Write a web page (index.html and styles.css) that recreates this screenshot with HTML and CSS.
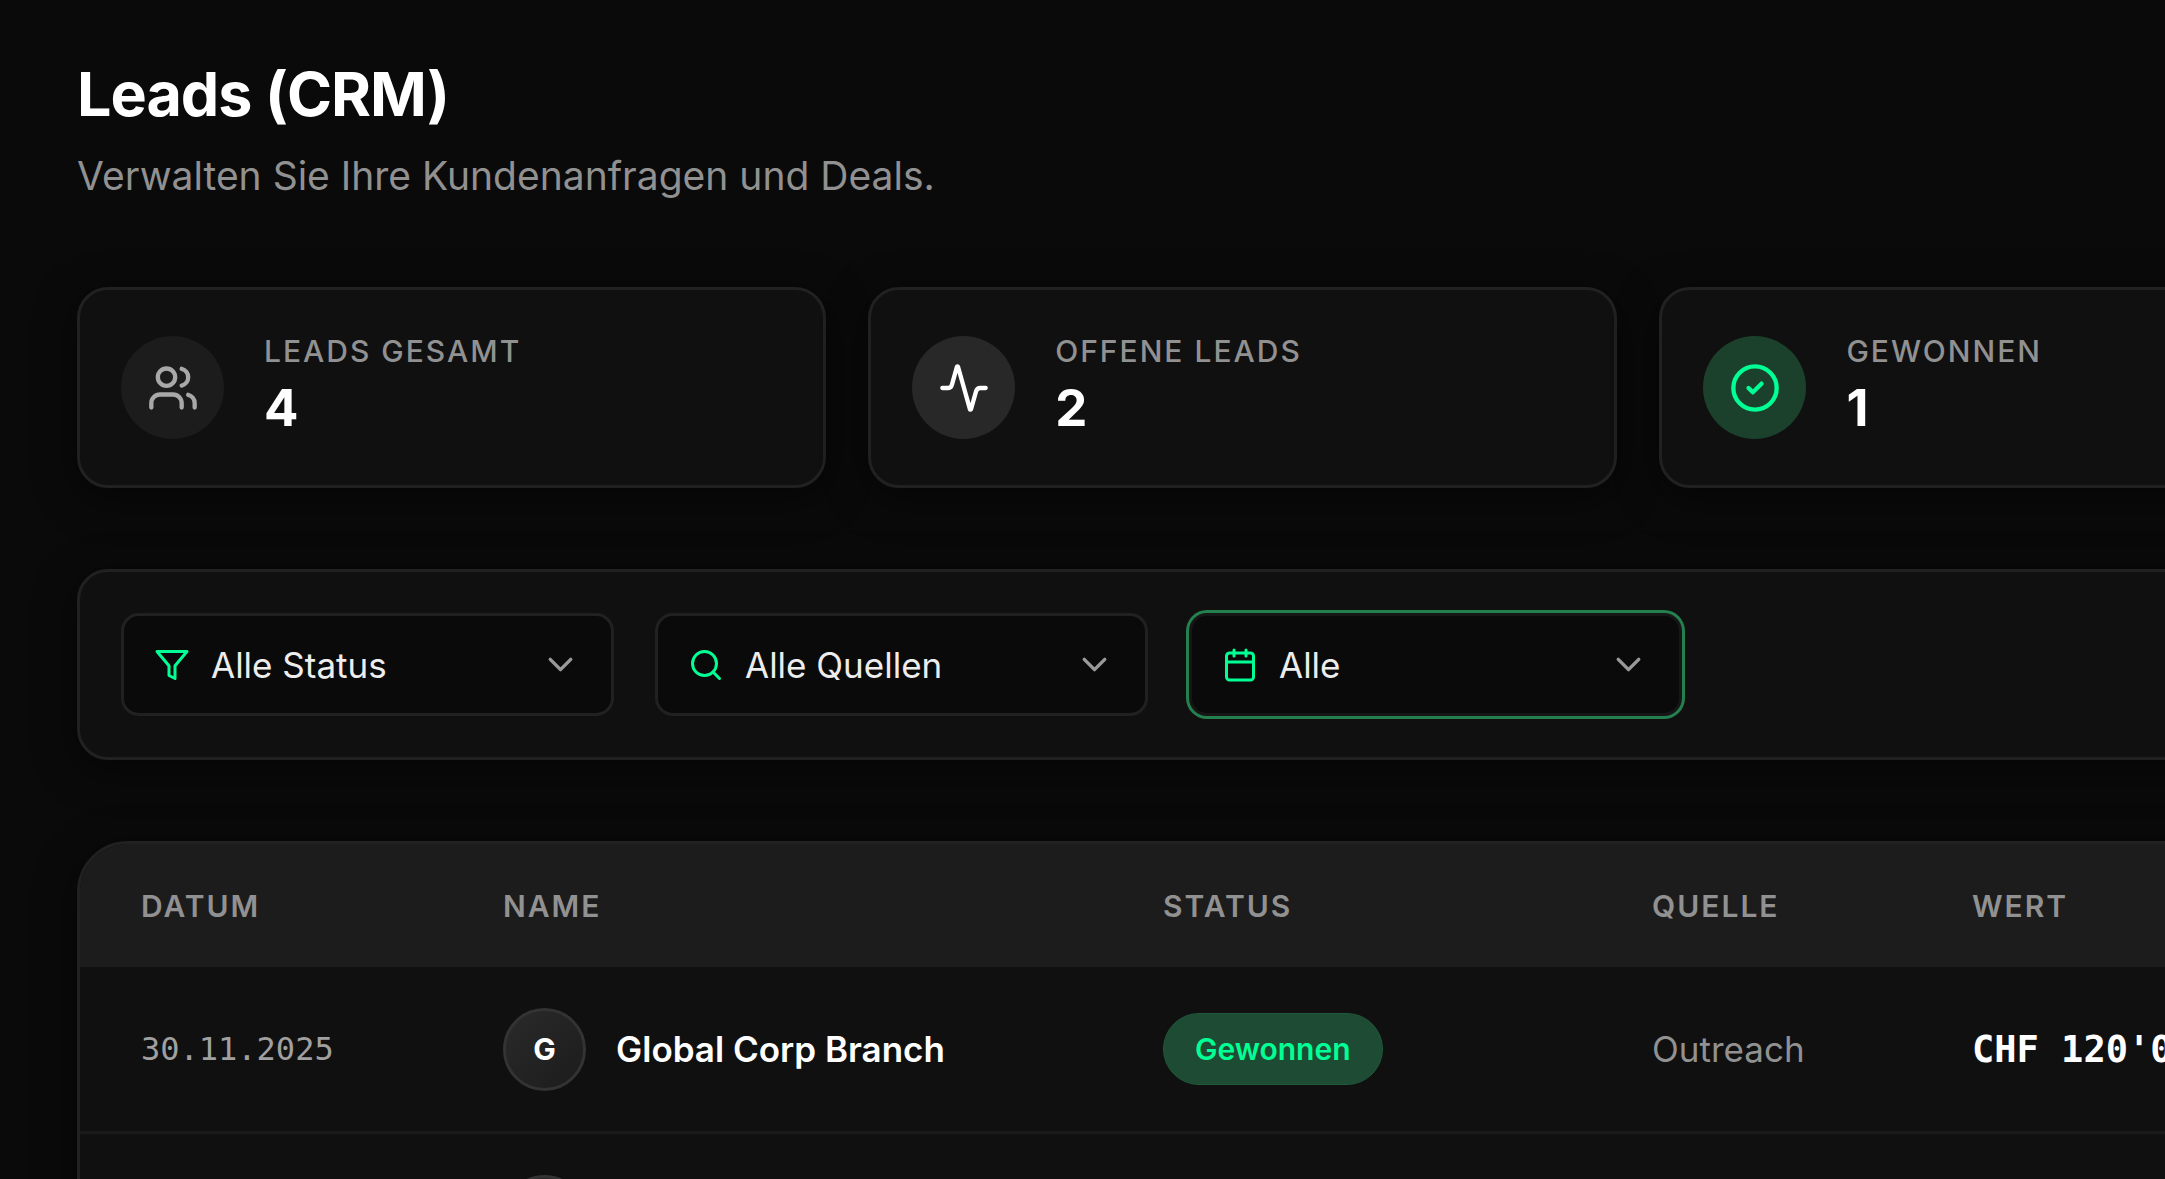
FILE: index.html
```html
<!doctype html>
<html lang="de">
<head>
    <meta charset="UTF-8">
    <meta name="viewport" content="width=device-width, initial-scale=1.0">
    <title>Leads (CRM)</title>
    <link rel="stylesheet" href="styles.css">
</head>
<body>
<main class="page">
    <header class="page-header">
        <h1>Leads (CRM)</h1>
        <p>Verwalten Sie Ihre Kundenanfragen und Deals.</p>
    </header>

    <section class="stats">
        <div class="card stat">
            <span class="stat-icon">
                <svg class="icon" viewBox="0 0 24 24">
                    <path d="M16 21v-2a4 4 0 0 0-4-4H6a4 4 0 0 0-4 4v2"/>
                    <circle cx="9" cy="7" r="4"/>
                    <path d="M22 21v-2a4 4 0 0 0-3-3.87"/>
                    <path d="M16 3.13a4 4 0 0 1 0 7.75"/>
                </svg>
            </span>
            <div>
                <p class="stat-label">Leads gesamt</p>
                <p class="stat-value">4</p>
            </div>
        </div>
        <div class="card stat">
            <span class="stat-icon open">
                <svg class="icon" viewBox="0 0 24 24">
                    <path d="M22 12h-2.48a2 2 0 0 0-1.93 1.46l-2.35 8.36a.25.25 0 0 1-.48 0L9.24 2.18a.25.25 0 0 0-.48 0l-2.35 8.36A2 2 0 0 1 4.49 12H2"/>
                </svg>
            </span>
            <div>
                <p class="stat-label">Offene Leads</p>
                <p class="stat-value">2</p>
            </div>
        </div>
        <div class="card stat">
            <span class="stat-icon won">
                <svg class="icon" viewBox="0 0 24 24">
                    <circle cx="12" cy="12" r="10"/>
                    <path d="m9 12 2 2 4-4"/>
                </svg>
            </span>
            <div>
                <p class="stat-label">Gewonnen</p>
                <p class="stat-value">1</p>
            </div>
        </div>
    </section>

    <section class="card filters">
        <div class="filter">
            <select aria-label="Status">
                <option>Alle Status</option>
            </select>
            <svg class="icon filter-icon" viewBox="0 0 24 24">
                <path d="M22 3H2l8 9.46V19l4 2v-8.54L22 3z"/>
            </svg>
            <svg class="icon chevron" viewBox="0 0 24 24">
                <path d="m6 9 6 6 6-6"/>
            </svg>
        </div>
        <div class="filter">
            <select aria-label="Quelle">
                <option>Alle Quellen</option>
            </select>
            <svg class="icon filter-icon" viewBox="0 0 24 24">
                <circle cx="11" cy="11" r="8"/>
                <path d="m21 21-4.3-4.3"/>
            </svg>
            <svg class="icon chevron" viewBox="0 0 24 24">
                <path d="m6 9 6 6 6-6"/>
            </svg>
        </div>
        <div class="filter active">
            <select aria-label="Zeitraum">
                <option>Alle</option>
            </select>
            <svg class="icon filter-icon" viewBox="0 0 24 24">
                <rect x="3" y="4" width="18" height="18" rx="2"/>
                <path d="M8 2v4M16 2v4M3 10h18"/>
            </svg>
            <svg class="icon chevron" viewBox="0 0 24 24">
                <path d="m6 9 6 6 6-6"/>
            </svg>
        </div>
    </section>

    <section class="card table-card">
        <table class="leads">
            <thead>
            <tr>
                <th class="col-date">Datum</th>
                <th class="col-name">Name</th>
                <th class="col-status">Status</th>
                <th class="col-source">Quelle</th>
                <th>Wert</th>
            </tr>
            </thead>
            <tbody>
            <tr>
                <td class="date">30.11.2025</td>
                <td>
                    <div class="lead">
                        <span class="avatar">G</span>
                        <span class="lead-name">Global Corp Branch</span>
                    </div>
                </td>
                <td><span class="badge">Gewonnen</span></td>
                <td class="source">Outreach</td>
                <td class="amount">CHF 120'000</td>
            </tr>
            <tr>
                <td></td>
                <td>
                    <div class="lead"><span class="avatar"></span></div>
                </td>
                <td></td>
                <td></td>
                <td></td>
            </tr>
            </tbody>
        </table>
    </section>
</main>
</body>
</html>
```
FILE: styles.css
```css
* {
    box-sizing: border-box;
    margin: 0;
    padding: 0;
}

:root {
    --bg: #0a0a0a;
    --card: #101010;
    --border: #212121;
    --muted: #919191;
    --green: #00ff94;
}

html, body {
    height: 100%;
    overflow: hidden;
}

body {
    background-color: var(--bg);
    color: #fff;
    font-family: Inter, "Liberation Sans", sans-serif;
    font-size: 35px;
}

/* wider than the window, the right part is cut off */
.page {
    display: flex;
    flex-direction: column;
    gap: 81px;
    width: 152vw;
    padding: 58px 91px 58px 77px;
}

.page-header h1 {
    font-size: 61px;
    line-height: 72px;
    font-weight: 700;
    letter-spacing: -1px;
}

.page-header p {
    margin-top: 16px;
    font-size: 39px;
    line-height: 60px;
    color: var(--muted);
}

.icon {
    fill: none;
    stroke: currentColor;
    stroke-width: 2;
    stroke-linecap: round;
    stroke-linejoin: round;
}

.card {
    background-color: var(--card);
    border: 3px solid var(--border);
    border-radius: 31px;
    box-shadow: 0 10px 40px rgba(0, 0, 0, 0.5);
}

.stats {
    display: grid;
    grid-template-columns: repeat(4, 1fr);
    gap: 42px;
}

.stat {
    display: flex;
    align-items: center;
    gap: 40px;
    padding: 41px;
}

.stat-icon {
    display: flex;
    align-items: center;
    justify-content: center;
    width: 103px;
    height: 103px;
    border-radius: 50%;
    background-color: #1c1c1c;
    color: #a8a8a8;
}

.stat-icon .icon {
    width: 52px;
    height: 52px;
}

.stat-icon.open {
    background-color: #282828;
    color: #fff;
}

.stat-icon.won {
    background-color: #1b402c;
    color: var(--green);
}

.stat-label {
    font-size: 30px;
    line-height: 41px;
    font-weight: 500;
    letter-spacing: 2px;
    text-transform: uppercase;
    color: var(--muted);
}

.stat-value {
    font-size: 51px;
    line-height: 72px;
    font-weight: 700;
}

.filters {
    display: flex;
    gap: 41px;
    padding: 41px;
}

.filter {
    display: grid;
    align-items: center;
    width: 493px;
}

.filter > * {
    grid-area: 1 / 1;
}

.filter select {
    width: 100%;
    height: 103px;
    padding: 0 87px;
    appearance: none;
    outline: none;
    border: 3px solid var(--border);
    border-radius: 18px;
    background-color: var(--bg);
    color: #ededed;
    font: inherit;
}

.filter.active select {
    border-color: #161616;
    box-shadow: 0 0 0 3px #24804f;
}

.filter-icon {
    width: 36px;
    height: 36px;
    margin-left: 33px;
    color: var(--green);
    pointer-events: none;
}

.chevron {
    justify-self: end;
    width: 41px;
    height: 41px;
    margin-right: 33px;
    color: #999;
    pointer-events: none;
}

.table-card {
    overflow: hidden;
    border-radius: 51px;
}

.leads {
    width: 100%;
    table-layout: fixed;
    border-spacing: 0;
    text-align: left;
    white-space: nowrap;
}

.leads th {
    height: 123px;
    padding: 0 0 0 61px;
    background-color: #1c1c1c;
    color: var(--muted);
    font-size: 30px;
    font-weight: 600;
    letter-spacing: 2px;
    text-transform: uppercase;
}

.leads td {
    height: 167px;
    padding: 0 0 0 61px;
    border-bottom: 3px solid #1a1a1a;
}

.col-date {
    width: 362px;
}

.col-name {
    width: 660px;
}

.col-status {
    width: 489px;
}

.col-source {
    width: 320px;
}

.leads .date {
    font-family: "DejaVu Sans Mono", monospace;
    font-size: 32px;
    color: #a0a0a0;
}

.lead {
    display: flex;
    align-items: center;
    gap: 30px;
}

.avatar {
    display: flex;
    align-items: center;
    justify-content: center;
    width: 83px;
    height: 83px;
    border: 3px solid #333;
    border-radius: 50%;
    background: linear-gradient(135deg, #2a2a2a, #1c1c1c);
    font-size: 30px;
    font-weight: 700;
}

.lead-name {
    font-weight: 600;
}

.badge {
    display: inline-block;
    padding: 0 31px;
    border: 1px solid #20583b;
    border-radius: 37px;
    background-color: #1d4b33;
    color: var(--green);
    font-size: 30px;
    line-height: 70px;
    font-weight: 600;
}

.leads .source {
    color: var(--muted);
}

.leads .amount {
    font-family: "DejaVu Sans Mono", monospace;
    font-size: 37px;
    font-weight: 700;
}
```
